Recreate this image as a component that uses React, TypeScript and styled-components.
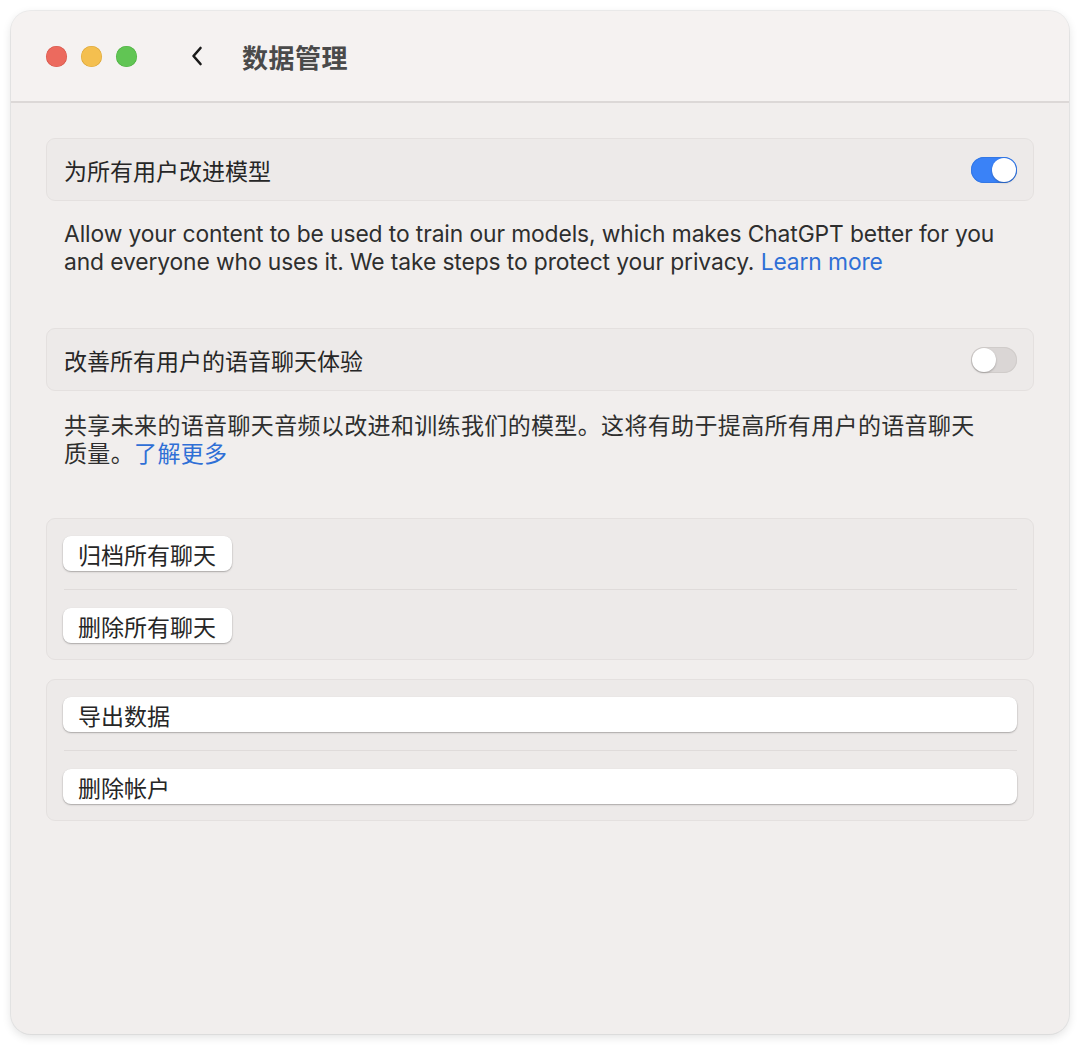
import React from 'react'
import styled, { createGlobalStyle } from 'styled-components'

const GlobalStyle = createGlobalStyle`
  html, body {
    margin: 0;
    padding: 0;
    background: #ffffff;
  }
  body {
    font-family: Inter, "Noto Sans CJK SC", sans-serif;
    color: #2b2b2b;
  }
`

const Page = styled.div`
  width: 1080px;
  height: 1045px;
  padding: 11px;
  box-sizing: border-box;
`

const Window = styled.div`
  height: 1023px;
  border-radius: 20px;
  background: #f1eeed;
  box-shadow: 0 0 0 1px rgba(0, 0, 0, 0.06), 0 3px 10px rgba(0, 0, 0, 0.12);
  overflow: hidden;
  display: flex;
  flex-direction: column;
`

const TitleBar = styled.div`
  height: 92px;
  flex-shrink: 0;
  background: #f5f2f1;
  border-bottom: 2px solid #dcd8d7;
  display: flex;
  align-items: center;
  padding-left: 35px;
  box-sizing: border-box;
`

const Lights = styled.div`
  display: flex;
  gap: 14px;
`

const Light = styled.span<{ $color: string; $edge: string }>`
  width: 21px;
  height: 21px;
  border-radius: 50%;
  background: ${(p) => p.$color};
  box-shadow: inset 0 0 0 0.5px ${(p) => p.$edge};
`

const Back = styled.button`
  border: 0;
  background: none;
  padding: 0;
  margin-left: 53px;
  display: flex;
  align-items: center;
`

const Title = styled.h1`
  margin: 0 0 0 38px;
  font-family: "Noto Sans CJK SC", sans-serif;
  font-size: 26px;
  font-weight: 700;
  color: #4a4a4a;
  letter-spacing: 0.5px;
`

const Content = styled.div`
  padding: 35px 35px 0 35px;
  display: flex;
  flex-direction: column;
`

const Card = styled.div`
  background: #edeae9;
  border: 1px solid #e4e0df;
  border-radius: 9px;
`

const ToggleRow = styled(Card)`
  height: 61px;
  display: flex;
  align-items: center;
  justify-content: space-between;
  padding: 0 16px 0 17px;
`

const Label = styled.span`
  font-family: "Noto Sans CJK SC", sans-serif;
  font-size: 23px;
  color: #262626;
`

const Switch = styled.span<{ $on: boolean }>`
  width: 46px;
  height: 26px;
  border-radius: 13px;
  background: ${(p) => (p.$on ? '#3a82f7' : '#dad6d5')};
  position: relative;
  box-shadow: inset 0 0 0 1px ${(p) => (p.$on ? '#3478e5' : '#d0ccca')};

  &::after {
    content: '';
    position: absolute;
    top: 1px;
    left: ${(p) => (p.$on ? '21px' : '1px')};
    width: 24px;
    height: 24px;
    border-radius: 50%;
    background: #ffffff;
    box-shadow: 0 1px 2px rgba(0, 0, 0, 0.25);
  }
`

const Note = styled.p`
  margin: 19px 30px 52px 18px;
  font-size: 22.8px;
  line-height: 28px;
  color: #2e2e2e;
  font-family: Inter, "Noto Sans CJK SC", sans-serif;
  letter-spacing: -0.1px;
`

const NoteCn = styled(Note)`
  margin-right: 45px;
  font-family: "Noto Sans CJK SC", sans-serif;
  font-size: 23px;
  letter-spacing: 0.35px;
`

const Link = styled.a`
  color: #2f6fd6;
  text-decoration: none;
`

const Group = styled(Card)`
  padding: 17px 16px 16px 16px;
  display: flex;
  flex-direction: column;
  & + & {
    margin-top: 19px;
  }
`

const Divider = styled.div`
  height: 1px;
  background: #dfdbda;
  margin: 18px 0 18px 1px;
`

const Action = styled.button<{ $wide?: boolean }>`
  align-self: ${(p) => (p.$wide ? 'stretch' : 'flex-start')};
  height: 35px;
  padding: 0 16px 0 15px;
  border: 0;
  border-radius: 8px;
  background: #ffffff;
  box-shadow: 0 0.5px 0 0.5px rgba(0, 0, 0, 0.08), 0 1px 2px rgba(0, 0, 0, 0.22);
  font-family: "Noto Sans CJK SC", sans-serif;
  font-size: 23px;
  color: #262626;
  text-align: left;
  display: flex;
  align-items: center;
`

function Chevron() {
  return (
    <svg width="14" height="22" viewBox="0 0 14 22">
      <path d="M10.5 3 L3.5 11 L10.5 19" fill="none" stroke="#1a1a1a" strokeWidth="2.6" strokeLinecap="round" strokeLinejoin="round" />
    </svg>
  )
}

export default function App() {
  return (
    <Page>
      <GlobalStyle />
      <Window>
        <TitleBar>
          <Lights>
            <Light $color="#ec6a5e" $edge="#d4574b" />
            <Light $color="#f4bf4f" $edge="#d9a53a" />
            <Light $color="#61c554" $edge="#4eaf42" />
          </Lights>
          <Back aria-label="back">
            <Chevron />
          </Back>
          <Title>数据管理</Title>
        </TitleBar>
        <Content>
          <ToggleRow>
            <Label>为所有用户改进模型</Label>
            <Switch $on={true} />
          </ToggleRow>
          <Note>
            Allow your content to be used to train our models, which makes ChatGPT better for you and everyone who
            uses it. We take steps to protect your privacy. <Link href="#">Learn more</Link>
          </Note>
          <ToggleRow>
            <Label>改善所有用户的语音聊天体验</Label>
            <Switch $on={false} />
          </ToggleRow>
          <NoteCn>
            共享未来的语音聊天音频以改进和训练我们的模型。这将有助于提高所有用户的语音聊天质量。
            <Link href="#">了解更多</Link>
          </NoteCn>
          <Group>
            <Action>归档所有聊天</Action>
            <Divider />
            <Action>删除所有聊天</Action>
          </Group>
          <Group>
            <Action $wide>导出数据</Action>
            <Divider />
            <Action $wide>删除帐户</Action>
          </Group>
        </Content>
      </Window>
    </Page>
  )
}
